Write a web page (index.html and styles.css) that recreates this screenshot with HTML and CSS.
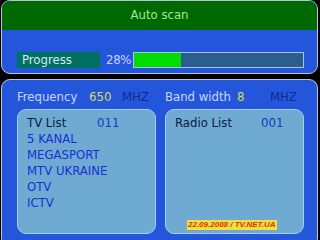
FILE: index.html
```html
<!DOCTYPE html>
<html lang="en">
  <head>
    <meta charset="UTF-8" />
    <title>Auto scan</title>
    <link rel="stylesheet" href="styles.css">
  </head>
  <body>
    <!-- scan progress panel -->
    <div class="panel top-panel">
      <div class="panel-title">Auto scan</div>
      <div class="progress-row">
        <div class="progress-label">Progress</div>
        <div class="progress-value">28%</div>
        <div class="progress-bar">
          <div class="progress-fill" style="width: 28%"></div>
        </div>
      </div>
    </div>

    <!-- found channels panel -->
    <div class="panel bottom-panel">
      <div class="info-row">
        <div class="info-group">
          <span class="info-name">Frequency</span>
          <span class="info-value">650</span>
          <span class="info-unit">MHZ</span>
        </div>
        <div class="info-group">
          <span class="info-name">Band width</span>
          <span class="info-value">8</span>
          <span class="info-unit">MHZ</span>
        </div>
      </div>
      <div class="lists">
        <div class="list-box">
          <div class="list-head">
            <span class="list-title">TV List</span>
            <span class="list-count">011</span>
          </div>
          <div class="channel">5 KANAL</div>
          <div class="channel">MEGASPORT</div>
          <div class="channel">MTV UKRAINE</div>
          <div class="channel">OTV</div>
          <div class="channel">ICTV</div>
        </div>
        <div class="list-box">
          <div class="list-head">
            <span class="list-title radio-title">Radio List</span>
            <span class="list-count">001</span>
          </div>
          <div class="stamp">22.09.2008 / TV.NET.UA</div>
        </div>
      </div>
    </div>
  </body>
</html>
```

FILE: styles.css
```css
body {
  margin: 0;
  width: 320px;
  height: 240px;
  background-color: #000;
  font-family: 'Liberation Sans Narrow', 'DejaVu Sans Condensed', 'Liberation Sans', sans-serif;
  font-size: 13px;
  line-height: 16px;
  overflow: hidden;
}

.panel {
  width: 315px;
  margin-left: 1px;
  border: 1px solid #b8c4d8;
  border-radius: 9px;
  background-color: #2456dc;
  overflow: hidden;
}

/* top panel */
.top-panel {
  height: 72px;
}

.panel-title {
  height: 29px;
  line-height: 28px;
  background-color: #006800;
  color: #98ec98;
  text-align: center;
}

.progress-row {
  display: flex;
  align-items: center;
  margin-top: 22px;
  padding-left: 15px;
}

.progress-label {
  width: 78px;
  height: 16px;
  padding-left: 5px;
  background-color: #007062;
  color: #d8e8f0;
}

.progress-value {
  width: 27px;
  padding-left: 6px;
  color: #c8d4ff;
  letter-spacing: -0.3px;
}

.progress-bar {
  width: 169px;
  height: 14px;
  border: 1px solid #a8c4e4;
  background-color: #2a5e8e;
}

.progress-fill {
  height: 100%;
  background-color: #00dc00;
}

/* bottom panel */
.bottom-panel {
  height: 157px;
  margin-top: 5px;
  padding: 9px 0 0 15px;
  box-sizing: content-box;
  width: 300px;
}

.info-row {
  display: grid;
  grid-template-columns: 148px 140px;
}

.info-group {
  display: grid;
  grid-template-columns: 72px 33px auto;
}

.info-name {
  color: #c8d6ff;
}

.info-value {
  color: #d8dc58;
}

.info-unit {
  color: #102c8c;
}

.lists {
  display: grid;
  grid-template-columns: 139px 139px;
  gap: 9px;
  margin-top: 4px;
}

.list-box {
  position: relative;
  height: 118px;
  padding: 5px 9px 0;
  border: 1px solid #a8cce8;
  border-radius: 9px;
  background-color: #6eaad2;
}

.list-head {
  display: flex;
}

.list-title {
  width: 70px;
  color: #0c1a44;
}

.radio-title {
  width: 86px;
}

.list-count {
  color: #1a38c0;
}

.channel {
  color: #1a2ed4;
}

/* watermark */
.stamp {
  position: absolute;
  left: 21px;
  bottom: 3px;
  padding: 0 1px;
  background-color: #f0e040;
  color: #e0300c;
  font-family: 'Liberation Sans', sans-serif;
  font-size: 8px;
  font-weight: bold;
  font-style: italic;
  line-height: 10px;
}
```
